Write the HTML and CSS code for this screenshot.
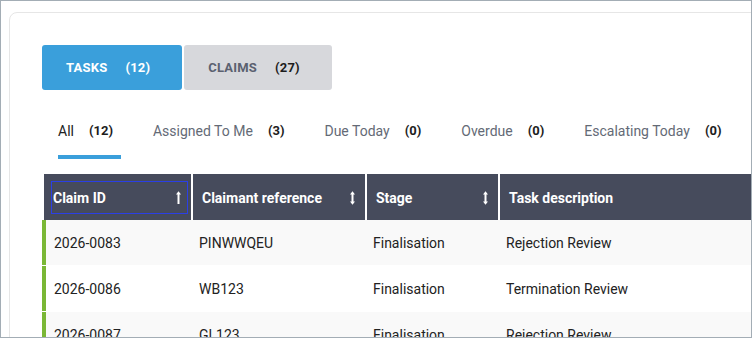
FILE: index.html
```html
<!DOCTYPE html>
<html lang="en">
<head>
  <meta charset="UTF-8">
  <title>Worklist</title>
  <meta name="viewport" content="width=device-width, initial-scale=1.0">
  <link rel="stylesheet" href="styles.css">
</head>
<body>
  <div class="frame">
    <div class="card">
      <div class="switcher">
        <button class="switch-btn active">TASKS <span class="count">(12)</span></button>
        <button class="switch-btn">CLAIMS <span class="count">(27)</span></button>
      </div>

      <ul class="filters">
        <li class="filter current">All <span class="count">(12)</span></li>
        <li class="filter">Assigned To Me <span class="count">(3)</span></li>
        <li class="filter">Due Today <span class="count">(0)</span></li>
        <li class="filter">Overdue <span class="count">(0)</span></li>
        <li class="filter">Escalating Today <span class="count">(0)</span></li>
      </ul>

      <div class="grid">
        <div class="grid-head">
          <div class="th">
            <div class="sort-btn focused">Claim ID
              <svg class="sort-icon" width="5" height="13" viewBox="0 0 5 13"><path d="M2.5 2V13" stroke="#fff" stroke-width="2"/><path d="M0 3.6L2.5 0.2L5 3.6Z" fill="#fff"/></svg>
            </div>
          </div>
          <div class="th">
            <div class="sort-btn">Claimant reference
              <svg class="sort-icon" width="5" height="14" viewBox="0 0 5 14"><path d="M2.5 2V12" stroke="#fff" stroke-width="2"/><path d="M0 3.4L2.5 0.2L5 3.4Z M0 10.6L2.5 13.8L5 10.6Z" fill="#fff"/></svg>
            </div>
          </div>
          <div class="th">
            <div class="sort-btn">Stage
              <svg class="sort-icon" width="5" height="14" viewBox="0 0 5 14"><path d="M2.5 2V12" stroke="#fff" stroke-width="2"/><path d="M0 3.4L2.5 0.2L5 3.4Z M0 10.6L2.5 13.8L5 10.6Z" fill="#fff"/></svg>
            </div>
          </div>
          <div class="th">
            <div class="sort-btn">Task description</div>
          </div>
        </div>

        <div class="row">
          <div class="td">2026-0083</div>
          <div class="td">PINWWQEU</div>
          <div class="td">Finalisation</div>
          <div class="td">Rejection Review</div>
        </div>
        <div class="row">
          <div class="td">2026-0086</div>
          <div class="td">WB123</div>
          <div class="td">Finalisation</div>
          <div class="td">Termination Review</div>
        </div>
        <div class="row">
          <div class="td">2026-0087</div>
          <div class="td">GL123</div>
          <div class="td">Finalisation</div>
          <div class="td">Rejection Review</div>
        </div>
      </div>
    </div>
  </div>
</body>
</html>
```

FILE: styles.css
```css
body {
  margin: 0;
  background: #fff;
  font-family: Roboto, "Open Sans", sans-serif;
  color: #222;
}
.frame {
  box-sizing: border-box;
  height: 338px;
  border: 1px solid #a3adb5;
  overflow: hidden;
  background: #fff;
}
.card {
  margin: 11px -40px 0 8px;
  border: 1px solid #e6e6e6;
  border-radius: 8px;
  padding: 32px 0 0 32px;
  min-height: 400px;
}

/* Tasks / Claims switch */
.switcher {
  display: flex;
  gap: 2px;
}
.switch-btn {
  height: 45px;
  padding: 0 32px 0 24px;
  border: none;
  border-radius: 3px;
  background: #d7d8dc;
  color: #5b6170;
  font-family: inherit;
  font-size: 13px;
  font-weight: 700;
  letter-spacing: 0.2px;
  display: flex;
  align-items: center;
}
.switch-btn .count {
  margin-left: 18px;
  color: #1d1d1d;
}
.switch-btn.active {
  background: #3a9fdb;
  color: #fff;
}
.switch-btn.active .count {
  color: #fff;
}

/* Filter tabs */
.filters {
  list-style: none;
  margin: 31px 0 0 16px;
  padding: 0;
  display: flex;
  gap: 32px;
}
.filter {
  font-size: 14px;
  line-height: 20px;
  color: #646a76;
  padding: 0 8px 14px 0;
  border-bottom: 4px solid transparent;
  display: flex;
  align-items: center;
}
.filter .count {
  margin-left: 15px;
  font-size: 13px;
  font-weight: 700;
  color: #1d1d1d;
}
.filter.current {
  color: #222;
  border-bottom-color: #3a9fdb;
}

/* Table */
.grid {
  margin-top: 15px;
}
.grid-head,
.row {
  display: grid;
  grid-template-columns: 149px 174px 133px 1fr;
}
.grid-head {
  background: #464b5c;
  height: 46px;
}
.th {
  border-left: 2px solid #fff;
  padding: 8px 4px 7px 8px;
  display: flex;
}
.sort-btn {
  flex: 1;
  display: flex;
  align-items: center;
  justify-content: space-between;
  padding: 0 6px 0 1px;
  color: #fff;
  font-size: 14px;
  font-weight: 700;
}
.sort-btn.focused {
  outline: 1px solid #2b3fe6;
}
.sort-icon {
  display: block;
}
.row {
  height: 45px;
  border-bottom: 1px solid #fff;
  background: #f9f9f9;
  font-size: 14px;
}
.row:nth-child(odd) {
  background: #fff;
}
.td {
  display: flex;
  align-items: center;
  padding-left: 8px;
}
.td:first-child {
  border-left: 4px solid #7ab735;
}
```
